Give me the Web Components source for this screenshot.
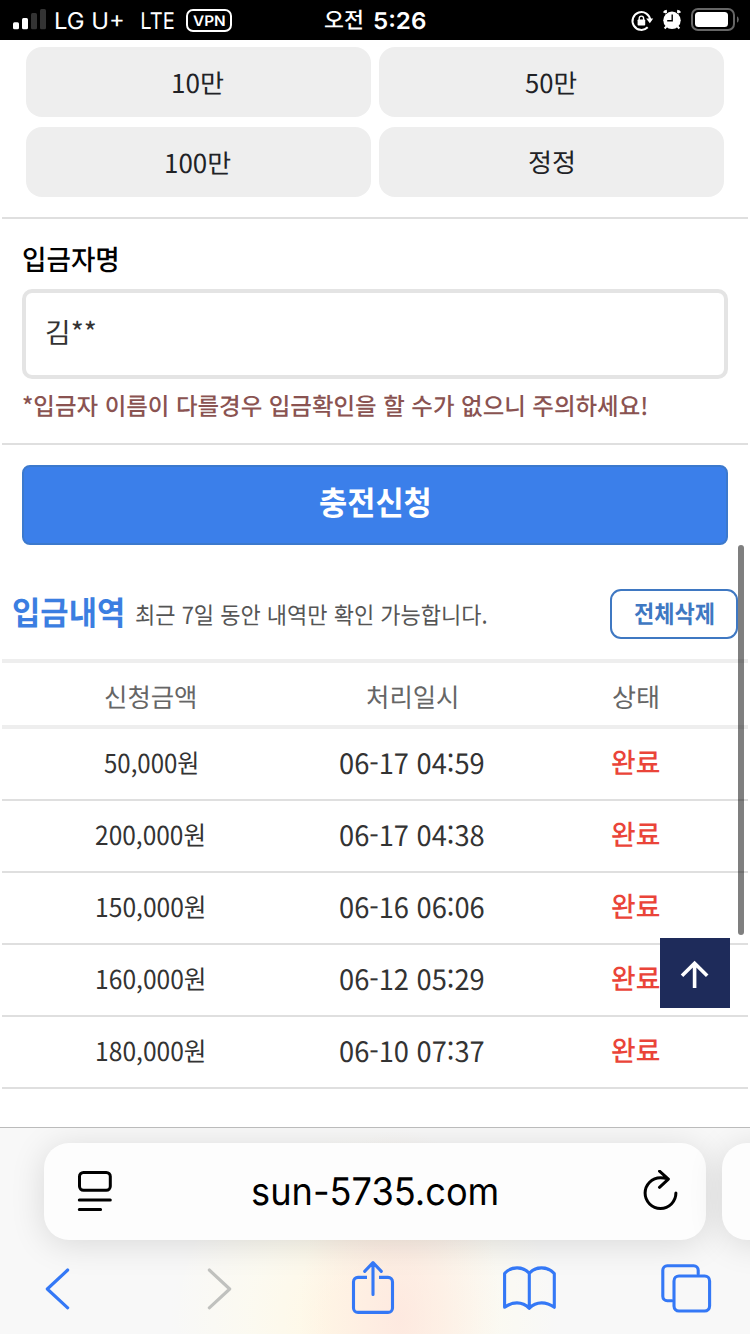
<!DOCTYPE html>
<html lang="ko">
<head>
<meta charset="utf-8">
<title>입금내역</title>
<style>
    body {
        margin: 0;
        width: 750px;
        height: 1334px;
        overflow: hidden;
        background: #fff;
        font-family: "Noto Sans CJK KR", sans-serif;
    }
</style>
</head>
<body>
<deposit-page></deposit-page>

<script>
const define = (name, html, init) => customElements.define(name, class extends HTMLElement {
    constructor() {
        super();
        this.attachShadow({ mode: 'open' }).innerHTML = html;
    }
    connectedCallback() {
        init && init.call(this);
    }
});

// text condensed to a given ink width, its box hugs the drawn glyphs
// w: width in px, dy: optical shift
class FitText extends HTMLElement {
    constructor() {
        super();
        this.attachShadow({ mode: 'open' }).innerHTML = `
        <style>
        :host { display:block; flex:none; white-space:nowrap; text-rendering:geometricPrecision; }
        span { display:inline-block; line-height:1; transform-origin:0 0; vertical-align:top; }
        </style>
        <span><slot></slot></span>
        `;
        this.span = this.shadowRoot.querySelector('span');
    }

    connectedCallback() {
        this.render();
    }

    render() {
        const cs = getComputedStyle(this);
        const c2d = document.createElement('canvas').getContext('2d');
        c2d.font = cs.fontWeight + ' ' + cs.fontSize + ' ' + cs.fontFamily;
        const m = c2d.measureText(this.textContent);
        const size = parseFloat(cs.fontSize);
        this.span.style.transform = 'none';
        // layout advances can differ a little from the canvas ones
        const ratio = (this.span.getBoundingClientRect().width || m.width) / m.width;
        const inkLeft = -m.actualBoundingBoxLeft;
        const ink = m.width * ratio - inkLeft - (m.width - m.actualBoundingBoxRight);
        const w = parseFloat(this.getAttribute('w')) || ink;
        const dy = parseFloat(this.getAttribute('dy')) || 0;
        // antialiased edges spill over the box, keep them inside
        const scale = (w - 1.4) / ink;
        const baseline = size / 2 + (m.fontBoundingBoxAscent - m.fontBoundingBoxDescent) / 2;
        const y = m.actualBoundingBoxAscent - baseline + dy;

        this.style.width = w + 'px';
        this.style.height = m.actualBoundingBoxAscent + m.actualBoundingBoxDescent + 'px';
        this.span.style.transform = `translate(${-inkLeft * scale}px, ${y}px) scaleX(${scale})`;
    }
}
customElements.define('fit-text', FitText);

define('status-bar', `
    <style>
    :host { display:grid; grid-template-columns:1fr auto 1fr; align-items:center; height:40px; background:#000; color:#fff; font-family:Inter, "Noto Sans CJK KR", sans-serif; font-size:23px; }
    div { display:flex; align-items:center; }
    .left { padding-left:13px; }
    .carrier { margin-left:10px; }
    .net { margin-left:17px; }
    .vpn { margin-left:10.5px; box-sizing:border-box; width:46px; height:23px; justify-content:center; border:2px solid #fff; border-radius:7px; font-size:14.5px; font-weight:600; }
    .time { gap:10px; padding-left:1px; font-weight:600; }
    .ko { font-family:"Noto Sans CJK KR", sans-serif; font-size:22px; font-weight:500; }
    .right { justify-content:flex-end; }
    svg { display:block; }
    </style>
    <div class="left">
        <svg width="33" height="40" fill="#fff">
            <rect y="22.3" width="6" height="7" rx="1.5"/>
            <rect x="9" y="18" width="6" height="11.3" rx="1.5"/>
            <rect x="18" y="13" width="6" height="16.3" rx="1.5" fill="#333"/>
            <rect x="27" y="9" width="6" height="20.3" rx="1.5" fill="#333"/>
        </svg>
        <fit-text class="carrier" w="69" dy="0.5">LG U+</fit-text>
        <fit-text class="net" w="33.5" dy="0.5">LTE</fit-text>
        <div class="vpn"><fit-text w="33" dy="1.4">VPN</fit-text></div>
    </div>
    <div class="time"><fit-text class="ko" w="39">오전</fit-text><fit-text w="53" dy="0.5">5:26</fit-text></div>
    <div class="right">
        <svg width="120" height="40" viewBox="630 0 120 40" fill="none">
            <path d="M647.7 27.3a8.9 8.9 0 1 1 2.6-7" stroke="#fff" stroke-width="2"/>
            <path d="M646.2 18.5h7l-3.4 4.8z" fill="#fff"/>
            <rect x="637.6" y="19.5" width="7.6" height="6" rx=".8" fill="#fff"/>
            <path d="M639.2 20v-1.7a2.2 2.2 0 0 1 4.4 0v1.7" stroke="#fff" stroke-width="1.4"/>
            <circle cx="672" cy="20.3" r="8.7" fill="#fff"/>
            <path d="M672.2 14.5v6.3h-5" stroke="#000" stroke-width="1.4"/>
            <path d="M664.3 12.9q.6-1.5 2.6-1.7M677.1 11.2q2 .2 2.6 1.7" stroke="#fff" stroke-width="3"/>
            <path d="M666.4 26.5l-1.8 2M677.6 26.5l1.8 2" stroke="#fff" stroke-width="2"/>
            <rect x="692" y="9" width="42" height="21" rx="6" stroke="#666" stroke-width="2"/>
            <rect x="695" y="12" width="33" height="15" rx="3.5" fill="#fff"/>
            <path d="M737 16.2q1.8 1 1.8 3.3t-1.8 3.3z" fill="#666"/>
        </svg>
    </div>
`);

define('amount-button', `
    <style>
    :host { display:flex; align-items:center; justify-content:center; height:70px; border-radius:16px; background:#eee; color:#212226; font-size:26px; }
    </style>
    <slot></slot>
`);

define('amount-grid', `
    <style>
    :host { display:grid; grid-template-columns:1fr 1fr; gap:10px 8px; margin:0 2px; padding:7px 24px 20px; border-bottom:2px solid #dfdfdf; }
    </style>
    <amount-button><fit-text w="51.5" dy="1.2">10만</fit-text></amount-button>
    <amount-button><fit-text w="52.5" dy="1.2">50만</fit-text></amount-button>
    <amount-button><fit-text w="65.5" dy="1.2">100만</fit-text></amount-button>
    <amount-button><fit-text w="45.5" dy="1.2">정정</fit-text></amount-button>
`);

define('depositor-field', `
    <style>
    :host { display:block; box-sizing:border-box; height:226px; margin:0 2px; padding:0 20px; border-bottom:2px solid #dfdfdf; }
    .label { display:flex; align-items:center; height:70px; padding-left:1px; box-sizing:border-box; padding-top:9px; color:#000; font-size:28px; font-weight:500; }
    .box { display:flex; align-items:center; box-sizing:border-box; height:90px; padding:0 20px 4px; border:4px solid #e4e4e4; border-radius:10px; color:#333; font-size:28px; }
    .note { display:flex; align-items:center; height:54px; padding-left:1px; color:#8a5351; font-size:24px; font-weight:500; }
    </style>
    <div class="label"><fit-text w="95.5" dy="0.5">입금자명</fit-text></div>
    <div class="box"><fit-text w="51" dy="1">김**</fit-text></div>
    <div class="note"><fit-text w="624.5">*입금자 이름이 다를경우 입금확인을 할 수가 없으니 주의하세요!</fit-text></div>
`);

define('submit-button', `
    <style>
    :host { display:flex; align-items:center; justify-content:center; box-sizing:border-box; height:80px; margin:20px 22px 0; padding-bottom:5px; border:2px solid #3c79cd; border-radius:8px; background:#3b7fea; color:#fff; font-size:33px; font-weight:700; }
    </style>
    <slot></slot>
`);

define('history-head', `
    <style>
    :host { display:flex; align-items:center; box-sizing:border-box; height:114px; padding:24px 12px 0 13px; }
    .title { color:#3b7ee1; font-size:33px; font-weight:700; }
    .sub { margin-left:12.5px; color:#555; font-size:23.5px; }
    .clear { display:flex; align-items:center; justify-content:center; box-sizing:border-box; width:128px; height:50px; margin-left:auto; border:2px solid #3f78c2; border-radius:11px; background:#fff; color:#3f78c2; font-size:24.5px; font-weight:700; }
    </style>
    <fit-text class="title" w="110.5" dy="-1.5">입금내역</fit-text>
    <fit-text class="sub" w="351.5" dy="2">최근 7일 동안 내역만 확인 가능합니다.</fit-text>
    <div class="clear"><fit-text w="81" dy="1">전체삭제</fit-text></div>
`);

const rows = [
    ['50,000원', 95, '06-17 04:59'],
    ['200,000원', 109.5, '06-17 04:38'],
    ['150,000원', 109, '06-16 06:06'],
    ['160,000원', 109, '06-12 05:29'],
    ['180,000원', 109, '06-10 07:37'],
];

define('history-table', `
    <style>
    :host { display:block; margin:0 2px; color:#333; }
    .row { display:grid; grid-template-columns:298px 224px 224px; place-items:center; height:70px; border-bottom:2px solid #dfdfdf; font-size:26px; }
    .head { height:62px; border:solid #eee; border-width:4px 0; color:#666; }
    .date { padding-left:1px; font-size:28px; }
    .state { color:#ea4439; font-size:28px; font-weight:500; }
    </style>
    <div class="row head">
        <fit-text w="92" dy="4">신청금액</fit-text>
        <fit-text w="91" dy="4">처리일시</fit-text>
        <fit-text w="46.5" dy="4">상태</fit-text>
    </div>
`, function () {
    for (const [sum, w, date] of rows) {
        this.shadowRoot.innerHTML += `
        <div class="row">
            <fit-text w="${w}" dy="1">${sum}</fit-text>
            <fit-text class="date" w="145.5" dy="0.6">${date}</fit-text>
            <fit-text class="state" w="49" dy="-2.5">완료</fit-text>
        </div>`;
    }
});

define('scroll-thumb', `
    <style>
    :host { position:absolute; left:738px; top:545px; width:6px; height:390px; border-radius:3px; background:rgba(0,0,0,.5); }
    </style>
`);

define('top-button', `
    <style>
    :host { position:absolute; left:660px; top:938px; width:70px; height:70px; background:#1e2b5a; }
    svg { display:block; }
    </style>
    <svg width="70" height="70" fill="none" stroke="#fff" stroke-width="3.6"><path d="M34.6 50V25M22 37.8L34.6 25.2 47.2 37.8"/></svg>
`);

define('browser-bar', `
    <style>
    :host { position:absolute; left:0; top:1127px; width:750px; height:207px; box-sizing:border-box; overflow:hidden; border-top:1px solid #bbb;
        background:radial-gradient(ellipse 100px 190px at 400px 190px, rgba(253,228,222,.75), transparent), radial-gradient(ellipse 195px 190px at 365px 190px, #fff8e6 20%, rgba(254,251,236,.6) 60%, transparent), #f8f8f8; }
    .tabs { display:flex; gap:16px; padding:15px 0 0 44px; }
    .pill { flex:none; display:flex; align-items:center; justify-content:space-between; box-sizing:border-box; width:662px; height:97px; padding:0 27px 0 33px; border-radius:25px; background:#fdfdfd; box-shadow:0 4px 34px rgba(0,0,0,.13); color:#000; font-family:Inter, sans-serif; font-size:38px; }
    .pill fit-text { margin-right:3px; }
    .tools { display:flex; justify-content:space-between; padding:20px 36px 0 30px; }
    svg { display:block; fill:none; stroke-linecap:round; stroke-linejoin:round; }
    .pill svg { stroke:#000; stroke-width:3; }
    .tools svg { stroke:#3478f6; stroke-width:3.1; }
    .tools .off { stroke:#c0c1be; }
    </style>
    <div class="tabs">
        <div class="pill">
            <svg width="36" height="44" viewBox="77 1170 36 44"><rect x="79.5" y="1172.5" width="30.8" height="17.8" rx="4"/><path d="M79.3 1200h31M79.3 1209.4h21.3"/></svg>
            <fit-text w="245.5">sun-5735.com</fit-text>
            <svg width="38" height="44" viewBox="641 1169.5 38 44"><path d="M675.9 1192.6A15.4 15.4 0 1 1 660.5 1177.2Q664 1177.2 667.6 1178.4M659.5 1170.7L668.4 1178.6 659.5 1186.8"/></svg>
        </div>
        <div class="pill"></div>
    </div>
    <div class="tools">
        <svg width="56" height="56" viewBox="30 1260 56 56"><path d="M67.7 1270L47.3 1289 67.7 1307.8"/></svg>
        <svg class="off" width="56" height="56" viewBox="187 1260 56 56"><path d="M209.3 1270L229.7 1289 209.3 1307.8"/></svg>
        <svg width="56" height="56" viewBox="344 1260 56 56"><path stroke-linecap="butt" d="M367 1277.4h-9a4.5 4.5 0 0 0-4.5 4.5v26a4.5 4.5 0 0 0 4.5 4.5h30a4.5 4.5 0 0 0 4.5-4.5v-26a4.5 4.5 0 0 0-4.5-4.5h-9"/><path d="M373 1294.5V1263M364.7 1271.3L373 1262.7 381.3 1271.3"/></svg>
        <svg width="56" height="56" viewBox="501 1260 56 56"><path d="M529.3 1308.3V1273.3C523 1266 511 1266 504.6 1273.5V1307.3C512 1301.7 522 1300.8 529.3 1308.3C536.5 1300.8 546.5 1301.7 554.3 1307.3V1273.5C547.5 1266 535.5 1266 529.3 1273.3"/></svg>
        <svg width="56" height="56" viewBox="658 1260 56 56"><rect x="674" y="1276" width="35.6" height="35" rx="5"/><path d="M698.2 1274V1270.3a4.5 4.5 0 0 0-4.5-4.5H667.3a4.5 4.5 0 0 0-4.5 4.5V1296.3a4.5 4.5 0 0 0 4.5 4.5H672"/></svg>
    </div>
`);

define('deposit-page', `
    <style>
    :host { display:block; position:relative; height:1334px; overflow:hidden; }
    </style>
    <status-bar></status-bar>
    <amount-grid></amount-grid>
    <depositor-field></depositor-field>
    <submit-button><fit-text w="111">충전신청</fit-text></submit-button>
    <history-head></history-head>
    <history-table></history-table>
    <top-button></top-button>
    <scroll-thumb></scroll-thumb>
    <browser-bar></browser-bar>
`);
</script>
</body>
</html>
